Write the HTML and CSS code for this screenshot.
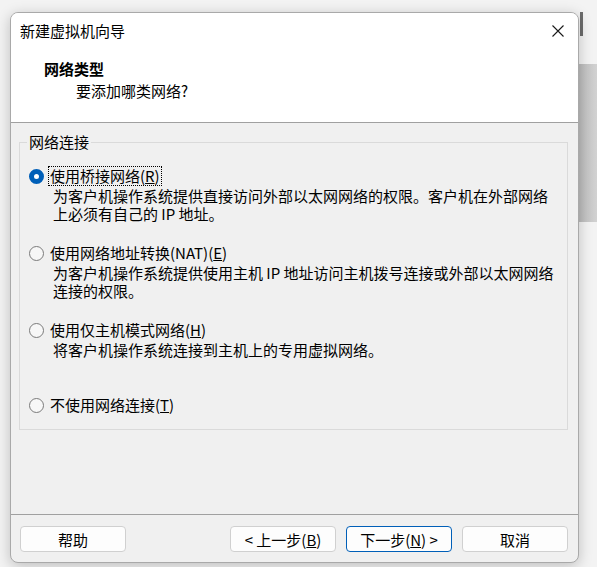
FILE: index.html
```html
<!DOCTYPE html>
<html lang="zh-CN">
<head>
  <meta charset="UTF-8">
  <title>新建虚拟机向导</title>
  <link rel="stylesheet" href="styles.css">
</head>

<body>

<div class="window">
  <div class="titlebar">
    <span class="title">新建虚拟机向导</span>
    <svg class="close" width="12" height="12" viewBox="0 0 12 12">
      <path d="M0.5 0.5 L11.5 11.5 M11.5 0.5 L0.5 11.5" stroke="#1a1a1a" stroke-width="1.1" fill="none"/>
    </svg>
  </div>

  <div class="header">
    <div class="header-title">网络类型</div>
    <div class="header-sub">要添加哪类网络?</div>
  </div>

  <div class="content">
    <fieldset class="group">
      <legend>网络连接</legend>

      <div class="options">
        <div class="option">
          <div class="radio-row">
            <span class="radio checked"></span>
            <span class="label focused">使用桥接网络(<u>R</u>)</span>
          </div>
          <p class="desc">为客户机操作系统提供直接访问外部以太网网络的权限。客户机在外部网络<br>上必须有自己的 IP 地址。</p>
        </div>

        <div class="option">
          <div class="radio-row">
            <span class="radio"></span>
            <span class="label">使用网络地址转换(NAT)(<u>E</u>)</span>
          </div>
          <p class="desc">为客户机操作系统提供使用主机 IP 地址访问主机拨号连接或外部以太网网络<br>连接的权限。</p>
        </div>

        <div class="option">
          <div class="radio-row">
            <span class="radio"></span>
            <span class="label">使用仅主机模式网络(<u>H</u>)</span>
          </div>
          <p class="desc">将客户机操作系统连接到主机上的专用虚拟网络。</p>
        </div>

        <div class="option">
          <div class="radio-row">
            <span class="radio"></span>
            <span class="label">不使用网络连接(<u>T</u>)</span>
          </div>
        </div>
      </div>
    </fieldset>
  </div>

  <div class="footer">
    <button class="btn">帮助</button>
    <div class="nav">
      <button class="btn">&lt; 上一步(<u>B</u>)</button>
      <button class="btn primary">下一步(<u>N</u>) &gt;</button>
      <button class="btn">取消</button>
    </div>
  </div>
</div>

</body>
</html>
```

FILE: styles.css
```css
body {
  margin: 0;
  padding: 0;
  height: 567px;
  overflow: hidden;
  font-family: "Noto Sans CJK SC", "Noto Sans", sans-serif;
  font-size: 15px;
  color: #000;
  background-color: #f3f3f3;
  /* bits of the window behind, on the right */
  background-image:
    linear-gradient(#6c6c6c, #6c6c6c),
    linear-gradient(to right, #bcbcbc, #d2d2d2);
  background-size: 3px 24px, 18px 158px;
  background-position: 580px 12px, 579px 64px;
  background-repeat: no-repeat;
}

.window {
  margin: 12px 0 0 10px;
  width: 569px;
  height: 551px;
  box-sizing: border-box;
  display: flex;
  flex-direction: column;
  background-color: #f0f0f0;
  border: 1px solid #a9a9a9;
  border-radius: 8px;
  overflow: hidden;
  box-shadow: 0 3px 14px rgba(0, 0, 0, 0.22);
}

.titlebar {
  height: 36px;
  display: flex;
  align-items: center;
  justify-content: space-between;
  padding: 0 14px 0 9px;
  background-color: #fff;
}

.title {
  line-height: 20px;
}

.close {
  display: block;
}

.header {
  background-color: #fff;
  padding: 9px 0 20px 33px;
  border-bottom: 1px solid #a0a0a0;
  line-height: 22px;
}

.header-title {
  font-weight: bold;
}

.header-sub {
  padding-left: 32px;
}

.content {
  flex: 1;
  padding: 10px 10px 0 8px;
}

.group {
  margin: 0;
  padding: 15px 0 14px 9px;
  border: 1px solid #dadada;
}

.group legend {
  margin-left: -2px;
  padding: 0 2px;
  line-height: 18px;
}

.options {
  display: grid;
  grid-template-rows: 77px 77px 75px auto;
}

.radio-row {
  display: flex;
  align-items: center;
  height: 20px;
}

.radio {
  width: 15px;
  height: 15px;
  box-sizing: border-box;
  border: 1px solid #7a7a7a;
  border-radius: 50%;
  background-color: #f7f7f7;
  margin-right: 4px;
  flex-shrink: 0;
}

.radio.checked {
  border: 5px solid #005fb8;
  background-color: #fff;
}

.label {
  line-height: 18px;
  padding: 0 1px;
  border: 1px dotted transparent;
}

.label.focused {
  border-color: #000;
}

.desc {
  margin: 1px 0 0 24px;
  line-height: 18px;
}

.footer {
  height: 48px;
  box-sizing: border-box;
  border-top: 1px solid #a0a0a0;
  padding: 11px 10px 0 9px;
  display: flex;
  align-items: flex-start;
}

.nav {
  margin-left: auto;
  display: flex;
  gap: 10px;
}

.btn {
  width: 106px;
  height: 26px;
  padding: 0;
  font-family: inherit;
  font-size: 15px;
  color: #000;
  background-color: #fdfdfd;
  border: 1px solid #d0d0d0;
  border-radius: 4px;
}

.btn.primary {
  border-color: #005fb8;
}
```
